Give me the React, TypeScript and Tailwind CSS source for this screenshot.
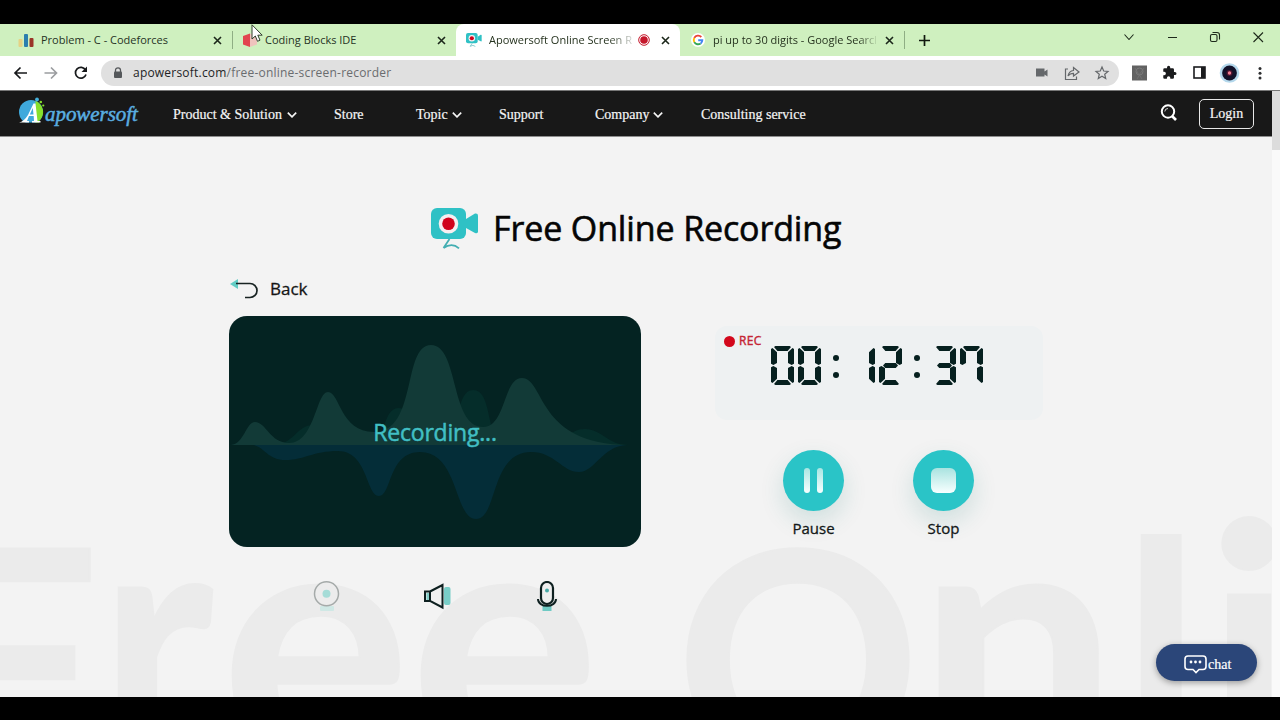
import React from "react";

const sans = "font-['Open_Sans','Noto_Sans',sans-serif]";
const serif = "font-['Liberation_Serif',serif]";

function TabClose() {
  return (
    <svg className="h-[9px] w-[9px] shrink-0" viewBox="0 0 9 9" stroke="#1c271a" strokeWidth="1.6">
      <path d="M1 1l7 7M8 1L1 8" />
    </svg>
  );
}

function CameraIcon({ className }: { className: string }) {
  return (
    <svg className={className} viewBox="0 0 48 42">
      <rect x="0" y="0" width="35" height="31" rx="6" fill="#2fc1c5" />
      <path d="M35 11L44 5.500Q47 5 47 7.500V23.500Q47 26 44 25L35 20Z" fill="#2fc1c5" />
      <circle cx="17.500" cy="15.800" r="9.800" fill="#f6eef0" />
      <circle cx="17.500" cy="15.800" r="6.300" fill="#d0021b" />
      <path d="M18.500 31L12.500 40M12.500 40Q21 34 28 40.300" fill="none" stroke="#43aeb2" strokeWidth="1.800" />
    </svg>
  );
}

function Chevron() {
  return (
    <svg className="ml-1 h-[6px] w-[10px] shrink-0" viewBox="0 0 10 6" fill="none" stroke="#f5f5f5" strokeWidth="1.600">
      <path d="M.8.6L5 4.900 9.200.6" />
    </svg>
  );
}

function TabStrip() {
  return (
    <div className={`${sans} relative flex h-8 shrink-0 items-center bg-[#cff0bf] text-[11px] text-[#26331f]`}>
      <div className="flex w-[232px] items-center pl-[18px]">
        <svg className="h-4 w-4" viewBox="0 0 16 16">
          <rect x="0.500" y="7" width="4" height="8" rx="1" fill="#e6d284" />
          <rect x="6" y="2" width="4" height="13" rx="1" fill="#2b7fae" />
          <rect x="11.500" y="6" width="4" height="9" rx="1" fill="#9a3428" />
        </svg>
        <span className="ml-[7px] w-[172px] whitespace-nowrap">Problem - C - Codeforces</span>
        <TabClose />
      </div>
      <div className="h-[18px] w-px bg-[#8fae84]" />
      <div className="flex w-[223px] items-center pl-[9px]">
        <svg className="h-4 w-4" viewBox="0 0 16 16">
          <path d="M1 4L8 1.500V15L1 12.500Z" fill="#e2444f" />
          <path d="M8 1.500L15 4V12.500L8 15Z" fill="#efc3bd" />
        </svg>
        <span className="ml-[7px] w-[172px] whitespace-nowrap">Coding Blocks IDE</span>
        <TabClose />
      </div>
      <div className="flex h-full w-[224px] items-center rounded-t-lg bg-white pl-[10px]">
        <CameraIcon className="h-[14px] w-4" />
        <span className="ml-[7px] w-[143px] overflow-hidden whitespace-nowrap [mask-image:linear-gradient(to_right,black_120px,transparent_148px)]">
          Apowersoft Online Screen Recorder
        </span>
        <svg className="ml-[6px] h-3 w-3" viewBox="0 0 12 12">
          <circle cx="6" cy="6" r="5.300" fill="none" stroke="#c5172b" strokeWidth="1" />
          <circle cx="6" cy="6" r="3.800" fill="#c5172b" />
        </svg>
        <span className="ml-[11px] flex"><TabClose /></span>
      </div>
      <div className="flex w-[224px] items-center pl-[11px]">
        <svg className="h-[14px] w-[14px]" viewBox="0 0 14 14" fill="none">
          <circle cx="7" cy="7" r="7" fill="#fff" />
          <g strokeWidth="1.900">
            <path d="M10.300 4A4.300 4.300 0 0 0 3.300 4.900" stroke="#ea4335" />
            <path d="M3.300 4.900A4.300 4.300 0 0 0 3.300 9.100" stroke="#fbbc05" />
            <path d="M3.300 9.100A4.300 4.300 0 0 0 9.700 10.400" stroke="#34a853" />
            <path d="M9.700 10.400A4.300 4.300 0 0 0 11.300 7.200H7.200" stroke="#4285f4" />
          </g>
        </svg>
        <span className="ml-2 w-[163px] overflow-hidden whitespace-nowrap [mask-image:linear-gradient(to_right,black_145px,transparent_166px)]">
          pi up to 30 digits - Google Search
        </span>
        <span className="ml-[9px] flex"><TabClose /></span>
      </div>
      <div className="h-[18px] w-px bg-[#8fae84]" />
      <svg className="ml-[14px] h-[11px] w-[11px]" viewBox="0 0 11 11" stroke="#10180e" strokeWidth="1.700"><path d="M5.500 0V11M0 5.500H11" /></svg>
      <svg className="mb-[6px] ml-auto h-3 w-[140px]" viewBox="0 0 140 12" fill="none" stroke="#1d291a" strokeWidth="1.100">
        <path d="M.5 3.500L5 8.500 9.500 3.500M44 6.500H53" />
        <rect x="86.500" y="3.500" width="6.500" height="7" rx="1.500" />
        <path d="M88.500 1.500H93Q95.500 1.500 95.500 4V8.500" />
        <path d="M129.500 1.500L139 11M139 1.500L129.500 11" />
      </svg>
      <div className="w-4" />
    </div>
  );
}

function Toolbar() {
  return (
    <div className={`${sans} flex h-[34px] shrink-0 items-center bg-white`}>
      <svg className="ml-[13px] h-4 w-[76px]" viewBox="0 0 76 16" fill="none" strokeWidth="1.700">
        <path d="M14 8H2M7.500 2.500L2 8l5.500 5.500" stroke="#17191b" />
        <path d="M31.500 8H43.500M38 2.500L43.500 8 38 13.500" stroke="#9b9da0" />
        <path d="M72.500 5A5.400 5.400 0 1 0 73 9.500" stroke="#17191b" />
        <path d="M74 1.500V7H68.500Z" fill="#17191b" />
      </svg>
      <div className="ml-[12px] flex h-[26px] w-[1018px] items-center rounded-full bg-[#e0e0e0] pl-[12px]">
        <svg className="h-3 w-[10px]" viewBox="0 0 10 12"><path d="M2.500 5V3.300a2.500 2.500 0 0 1 5 0V5" fill="none" stroke="#55585b" strokeWidth="1.300" /><rect x="1" y="4.500" width="8" height="6.500" rx="1" fill="#55585b" /></svg>
        <span className="ml-[10px] whitespace-nowrap text-[12px] tracking-[0.21px] text-[#6a6c6f]"><span className="text-[#222426]">apowersoft.com</span>/free-online-screen-recorder</span>
        <svg className="ml-auto mr-[9px] h-4 w-[76px]" viewBox="0 0 76 16" fill="none" stroke="#65686b" strokeWidth="1.200">
          <path d="M2 3.500H10.500V6.500L13.500 4.500V11.500L10.500 9.500V11.500H2Z" fill="#65686b" stroke="none" />
          <path d="M34 4H31.500V14.500H42.500V11.500" />
          <path d="M34 11Q35 6 39.500 5.500V2.500L45 7 39.500 11V8.300Q36 8.300 34 11Z" />
          <path d="M68 2L69.700 6 74 6.400 70.700 9.200 71.700 13.500 68 11.200 64.300 13.500 65.300 9.200 62 6.400 66.300 6Z" />
        </svg>
      </div>
      <svg className="ml-[13px] h-[22px] w-[136px]" viewBox="0 0 136 22">
        <rect x="0" y="3.500" width="15" height="15" fill="#626262" />
        <circle cx="7.500" cy="9.500" r="3.500" fill="none" stroke="#7b7b7b" />
        <path d="M3 6L7 13L12 6M5 17L7.500 13L10 17" fill="none" stroke="#747474" strokeWidth=".8" />
        <path transform="translate(30 3) scale(.63)" d="M20.500 11H19V7a2 2 0 0 0-2-2h-4V3.500a2.500 2.500 0 0 0-5 0V5H4a2 2 0 0 0-2 2v3.800h1.500a2.700 2.700 0 0 1 0 5.400H2V20a2 2 0 0 0 2 2h3.800v-1.500a2.700 2.700 0 0 1 5.400 0V22H17a2 2 0 0 0 2-2v-4h1.500a2.500 2.500 0 0 0 0-5z" fill="#1b1c1e" />
        <rect x="62" y="5" width="11" height="11" fill="#fff" stroke="#1b1c1e" strokeWidth="1.600" />
        <rect x="69" y="5" width="4" height="11" fill="#1b1c1e" />
        <circle cx="97.500" cy="11" r="9.800" fill="#b4d8ec" />
        <circle cx="97.500" cy="11" r="7.400" fill="#12122a" />
        <circle cx="97.500" cy="11" r="3" fill="#4d1631" />
        <circle cx="97.500" cy="11" r="1.700" fill="#ef7d91" />
        <g fill="#2c2d2f"><circle cx="128" cy="6.500" r="1.500" /><circle cx="128" cy="11.200" r="1.500" /><circle cx="128" cy="16" r="1.500" /></g>
      </svg>
    </div>
  );
}

function SiteHeader() {
  return (
    <header className={`${serif} flex h-[46px] shrink-0 items-center border-b border-[#8d8d8d] bg-[#181818] pt-[2px] text-[14px] text-[#f5f5f5] [-webkit-text-stroke:0.2px_currentColor]`}>
      <div className="flex w-[173px] items-center pl-[18px]">
        <svg className="mb-[8px] h-[27px] w-[27px] shrink-0" viewBox="0 0 27 27">
          <clipPath id="badge"><rect width="27" height="25.500" /></clipPath>
          <g clipPath="url(#badge)">
            <circle cx="13" cy="15" r="12" fill="#3fa9dc" />
            <path d="M17.500 3.800A12 12 0 0 1 21 24V27H17.500Z" fill="#86e02c" />
          </g>
          <circle cx="19" cy="2.500" r="1.900" fill="#45b0da" />
          <circle cx="22.800" cy="5" r="1.300" fill="#86e02c" />
          <circle cx="25.300" cy="8.500" r="1.100" fill="#86e02c" />
          <path d="M1 25.500Q6 24.500 10 18L15.500 6.500H17.500L19.500 24H22.500V25.500H14V24H16L15.700 19H11L9 24H11V25.500ZM11.800 17.500H15.500L14.800 11Z" fill="#fff" />
        </svg>
        <span className="text-[21px] italic leading-none tracking-[-0.05px] text-[#5aaee0] [-webkit-text-stroke:0.5px_#5aaee0]">apowersoft</span>
      </div>
      <div className="flex w-[161px] items-center whitespace-nowrap">Product &amp; Solution<span className="ml-px flex"><Chevron /></span></div>
      <div className="w-[82px]">Store</div>
      <div className="flex w-[83px] items-center">Topic<Chevron /></div>
      <div className="w-[96px]">Support</div>
      <div className="flex w-[106px] items-center">Company<Chevron /></div>
      <div className="whitespace-nowrap">Consulting service</div>
      <svg className="mb-1 ml-auto h-[17px] w-[17px]" viewBox="0 0 17 17" fill="none" stroke="#fff">
        <circle cx="8" cy="7.500" r="6.200" strokeWidth="2" /><path d="M12 12l4 4" strokeWidth="2.600" />
        <path d="M4.800 7.500A3.200 3.200 0 0 1 8 4.500" strokeWidth=".8" />
      </svg>
      <div className="mb-[2px] ml-[22px] mr-[18px] flex h-[30px] w-[55px] items-center justify-center rounded-[5px] border border-[#e8e8e8]">Login</div>
    </header>
  );
}

const SEGMENT_CLASS: Record<string, string> = {
  a: "left-[3px] top-0 h-[5px] w-[17px] [clip-path:polygon(0_20%,8%_0,92%_0,100%_20%,80%_100%,20%_100%)]",
  b: "right-0 top-[2px] h-[17px] w-[6px] [clip-path:polygon(100%_6%,100%_92%,60%_100%,0_88%,0_25%,75%_0)]",
  c: "right-0 bottom-[2px] h-[17px] w-[6px] [clip-path:polygon(100%_94%,100%_8%,60%_0,0_12%,0_75%,75%_100%)]",
  d: "left-[3px] bottom-0 h-[5px] w-[17px] [clip-path:polygon(0_80%,8%_100%,92%_100%,100%_80%,80%_0,20%_0)]",
  e: "left-0 bottom-[2px] h-[17px] w-[6px] [clip-path:polygon(0_94%,0_8%,40%_0,100%_12%,100%_75%,25%_100%)]",
  f: "left-0 top-[2px] h-[17px] w-[6px] [clip-path:polygon(0_6%,0_92%,40%_100%,100%_88%,100%_25%,25%_0)]",
  g: "left-[4px] top-[17px] h-[5px] w-[15px] [clip-path:polygon(0_50%,15%_0,85%_0,100%_50%,85%_100%,15%_100%)]",
};

const DIGIT_SEGMENTS: Record<string, string> = {
  "0": "abcdef", "1": "bc", "2": "abged", "3": "abgcd", "4": "fgbc",
  "5": "afgcd", "6": "afgecd", "7": "fabc", "8": "abcdefg", "9": "abcdfg",
};

function DigitPair({ value }: { value: string }) {
  return (
    <div className="flex gap-1">
      {value.split("").map((digit, i) => (
        <div key={i} className="relative h-[39px] w-[23px]">
          {DIGIT_SEGMENTS[digit].split("").map((s) => (
            <i key={s} className={`absolute bg-[#06201f] ${SEGMENT_CLASS[s]}`} />
          ))}
        </div>
      ))}
    </div>
  );
}

function Colon() {
  return (
    <div className="flex h-[39px] w-[6px] flex-col items-center justify-center gap-[11px] pt-[1px]">
      <i className="h-[6px] w-[6px] rounded-full bg-[#06201f]" />
      <i className="h-[6px] w-[6px] rounded-full bg-[#06201f]" />
    </div>
  );
}

function Watermark() {
  return (
    <div className="absolute inset-0 flex items-baseline overflow-hidden whitespace-nowrap pt-[309px] font-['Lato',sans-serif] text-[354px] font-bold leading-[372px] text-[#ebebeb] [-webkit-text-stroke:2px_#ebebeb]">
      <span className="-ml-[74px] w-[174px] shrink-0 text-[305px]">F</span>
      <span className="w-[121px] shrink-0 origin-left scale-x-[0.86]">r</span>
      <span className="w-[189px] shrink-0">e</span>
      <span className="w-[266px] shrink-0">e</span>
      <span className="w-[242px] shrink-0 text-[302px]">O</span>
      <span className="w-[204px] shrink-0">n</span>
      <span className="w-[84px] shrink-0 text-[315px]">l</span>
      <span className="shrink-0 text-[340px]">i</span>
    </div>
  );
}

function Waveform() {
  return (
    <svg className="col-start-1 row-start-1 h-[231px] w-[412px]" viewBox="0 0 412 231">
      <path d="M45 129C65 128 68 109 84 109C99 109 105 129 120 129H140C158 124 153 92 170 92C187 92 185 129 205 129H220C230 115 227 74 244 74C264 74 256 122 275 129H325C335 127 340 113 356 113C372 113 380 129 398 129Z" fill="#052d2a" />
      <path d="M2 129C15 128 17 106 26 106C37 106 41 127 60 127C86 127 87 76 99 76C111 76 111 116 145 116C189 116 173 29 202 29C230 29 221 111 254 111C277 111 274 62 293 62C316 62 307 129 400 129Z" fill="#123a37" />
      <path d="M24 129C35 130 38 144 57 144C75 144 84 135 109 135C139 135 137 180 150 180C163 180 159 136 191 136C230 136 225 203 247 203C269 203 261 136 302 136C326 136 333 156 350 156C366 156 373 130 398 129Z" fill="#042d38" />
    </svg>
  );
}

function RoundControl({ label, children }: { label: string; children: React.ReactNode }) {
  return (
    <div className="flex w-[61px] flex-col items-center">
      <div className="flex h-[61px] w-[61px] items-center justify-center rounded-full bg-[#2ac4c7] shadow-[0_10px_24px_rgba(20,120,110,0.16)]">{children}</div>
      <span className="mt-[6px] text-[15px] leading-[22px] text-[#131818] [-webkit-text-stroke:0.3px_currentColor]">{label}</span>
    </div>
  );
}

function Recorder() {
  return (
    <main className={`${sans} relative flex-1 overflow-hidden bg-[#f3f3f3]`}>
      <Watermark />
      <div className="relative">
        <div className="flex h-[101px] items-end pl-[431px]">
          <div className="flex h-[21px] items-center">
            <CameraIcon className="mt-[3px] h-[42px] w-12 shrink-0" />
            <h1 className="ml-[14px] whitespace-nowrap text-[34px] leading-none tracking-[-0.13px] text-[#050505] [-webkit-text-stroke:0.6px_currentColor]">Free Online Recording</h1>
          </div>
        </div>
        <div className="flex pl-[229px]">
          <section className="w-[412px]">
            <div className="mt-[38px] flex h-[26px] items-center">
              <svg className="h-5 w-[30px]" viewBox="0 0 30 20"><path d="M1 5L9 0V10Z" fill="#63cdc5" /><path d="M7 4.500H21A6.700 6.700 0 0 1 21 18.500H16" fill="none" stroke="#182322" strokeWidth="1.700" /></svg>
              <span className="ml-[11px] text-[17px] text-[#151515] [-webkit-text-stroke:0.3px_currentColor]">Back</span>
            </div>
            <div className="mt-[14px] grid h-[231px] w-[412px] place-items-center overflow-hidden rounded-[18px] bg-[#042322]">
              <Waveform />
              <span className="z-10 col-start-1 row-start-1 mt-[2px] text-[23px] tracking-[-0.2px] text-[#41bfc4] [-webkit-text-stroke:0.5px_currentColor]">Recording...</span>
            </div>
            <div className="mt-[34px] flex h-8 items-center">
              <svg className="ml-[84px] h-8 w-7" viewBox="0 0 28 32"><rect x="7" y="25" width="14" height="5" rx="1" fill="#cfe8e5" /><circle cx="13.500" cy="12.800" r="12" fill="#ececec" stroke="#a5aaa9" strokeWidth="1.500" /><circle cx="13.500" cy="12.800" r="4" fill="#a5dcd7" /></svg>
              <svg className="ml-[83px] h-8 w-7" viewBox="0 0 28 32"><rect x="20" y="6" width="6.500" height="18" rx="2" fill="#79cec8" /><path d="M1 10.500H6V20H1ZM6 10.500L18.500 4V26.500L6 20Z" fill="#f1f1f1" stroke="#0e2020" strokeWidth="2" /><path d="M2.500 12H5V19H2.500Z" fill="#83cfc9" /></svg>
              <svg className="ml-[85px] h-8 w-5" viewBox="0 0 20 32"><rect x="5.500" y="24" width="9" height="6" fill="#6fcac4" /><rect x="4" y="1" width="12" height="22" rx="6" fill="#eee" stroke="#0e2020" strokeWidth="2.200" /><circle cx="10" cy="9.500" r="2" fill="#49aaa7" /><path d="M1 18C1 27 19 27 19 18" fill="none" stroke="#0e2020" strokeWidth="2" /></svg>
            </div>
          </section>
          <section className="ml-[74px] w-[328px] pt-[88px]">
            <div className="flex h-[94px] w-[328px] items-start rounded-xl bg-[#eef1f2]">
              <div className="ml-[9px] mt-[7px] flex w-[47px] items-center">
                <i className="h-[11px] w-[11px] shrink-0 rounded-full bg-[#d3081c]" />
                <span className="ml-[4px] text-[12px] leading-4 tracking-[0.4px] text-[#c52534] [-webkit-text-stroke:0.4px_currentColor]">REC</span>
              </div>
              <div className="mt-[20px] flex" role="timer">
                <DigitPair value="00" />
                <span className="ml-[12px] mr-[13px]"><Colon /></span>
                <DigitPair value="12" />
                <span className="ml-[12px] mr-[13px]"><Colon /></span>
                <DigitPair value="37" />
              </div>
            </div>
            <div className="ml-[68px] mt-[30px] flex gap-[69px]">
              <RoundControl label="Pause">
                <div className="flex gap-[7px]">
                  <i className="h-[25px] w-[6px] rounded-full bg-linear-to-b from-[#a9e6e3] to-[#f7ffff]" />
                  <i className="h-[25px] w-[6px] rounded-full bg-linear-to-b from-[#a9e6e3] to-[#f7ffff]" />
                </div>
              </RoundControl>
              <RoundControl label="Stop">
                <i className="h-[25px] w-[25px] rounded-[6px] bg-linear-to-b from-[#a9e3e0] to-[#f7ffff]" />
              </RoundControl>
            </div>
          </section>
        </div>
      </div>
      <div className={`${serif} absolute bottom-[16px] right-[15px] flex h-[37px] w-[101px] items-center rounded-full bg-[#2b4679] pl-[28px] text-[14px] text-white shadow-[0_2px_6px_rgba(0,0,0,0.35)] [-webkit-text-stroke:0.2px_currentColor]`}>
        <svg className="mt-[3px] h-[19px] w-[23px]" viewBox="0 0 23 19" fill="none" stroke="#fff" strokeWidth="1.600"><path d="M4 1H19Q22 1 22 4V11.500Q22 14.500 19 14.500H15L12 17.500 9 14.500H4Q1 14.500 1 11.500V4Q1 1 4 1Z" /><g fill="#fff" stroke="none"><circle cx="7" cy="7" r="1.400" /><circle cx="11.500" cy="7" r="1.400" /><circle cx="16" cy="7" r="1.400" /></g></svg>
        <span className="ml-px mt-[3px]">chat</span>
      </div>
    </main>
  );
}

function MousePointer() {
  return (
    <svg className="absolute left-[251px] top-[24px] h-[19px] w-[13px]" viewBox="0 0 13 19"><path d="M1 .8V15L4.300 12 6.500 17.300 9 16.200 6.800 11.200H11.200Z" fill="#fff" stroke="#30402d" strokeWidth="1" /></svg>
  );
}

export default function App() {
  return (
    <div className="relative flex h-[720px] w-[1280px] flex-col overflow-hidden bg-black pb-[23px] pt-6">
      <TabStrip />
      <Toolbar />
      <div className="flex min-h-0 flex-1 border-t border-[#777]">
        <div className="flex min-w-0 flex-1 flex-col">
          <SiteHeader />
          <Recorder />
        </div>
        <div className="w-2 bg-[#fafafa]"><div className="h-[59px] bg-[#dcdcdc]" /></div>
      </div>
      <MousePointer />
    </div>
  );
}
